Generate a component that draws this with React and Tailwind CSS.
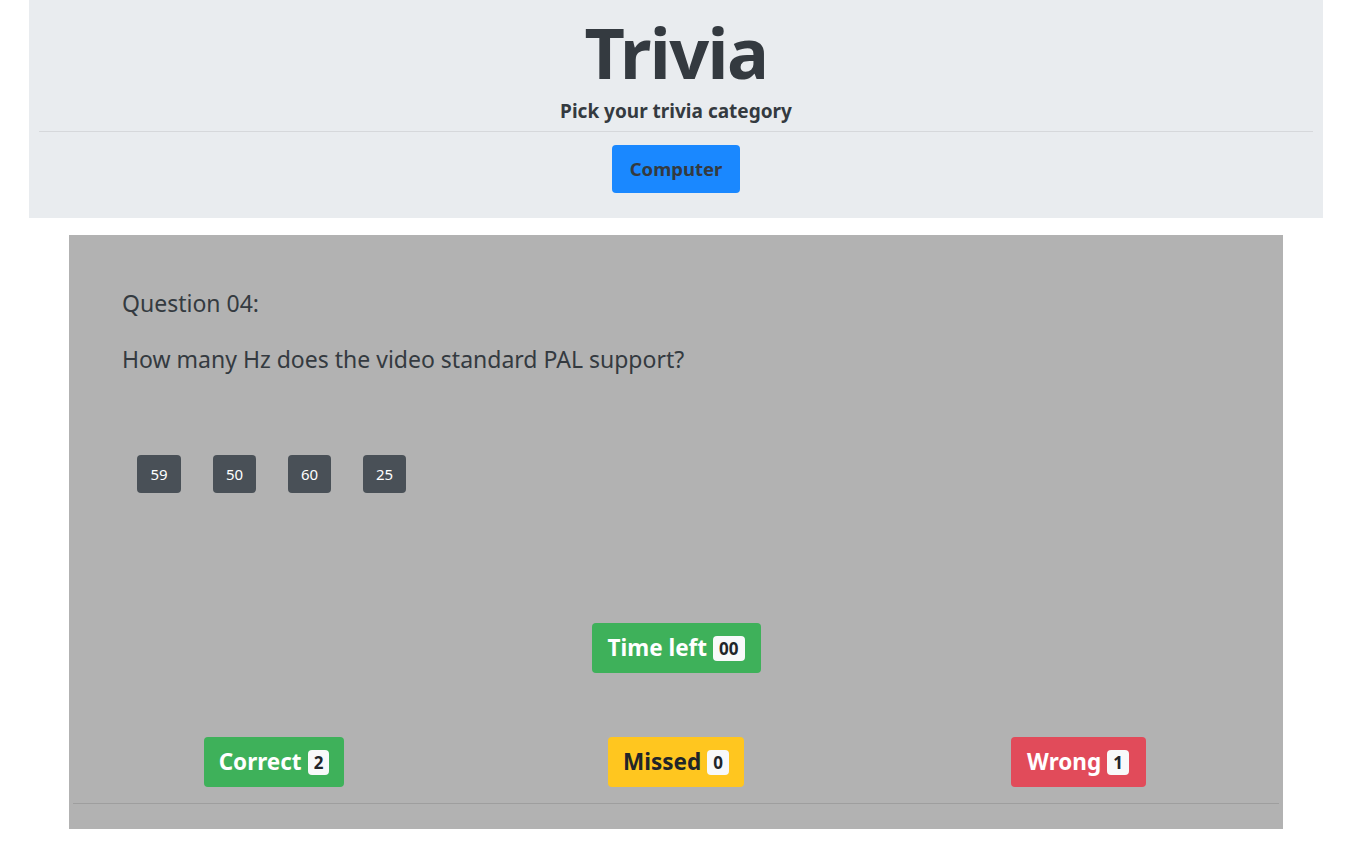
import React from 'react';

const answers = [
  { label: '59', w: 'w-[44px]' },
  { label: '50', w: 'w-[43px]' },
  { label: '60', w: 'w-[43px]' },
  { label: '25', w: 'w-[43px]' },
];

const Badge = ({ children }) => (
  <span className="ml-[6px] inline-flex items-center justify-center rounded-[4px] bg-[#f8f9fa] px-[6px] h-[25px] text-[17px] font-bold leading-none text-[#212529]">
    {children}
  </span>
);

const App = () => {
  return (
    <div className="min-h-screen w-full bg-white font-['Noto_Sans',sans-serif] text-[#343a40]">
      {/* header */}
      <div className="ml-[29px] w-[1294px] bg-[#e9ecef] pt-[10px] pb-[25px] text-center">
        <h1 className="text-[70px] font-bold leading-[84px] tracking-[-1.5px]">Trivia</h1>
        <p className="mt-[5px] text-[19px] font-bold leading-[25px]">Pick your trivia category</p>
        <hr className="mx-[10px] mt-[7px] border-t border-[#d6d8db]" />
        <div className="mt-[13px] flex justify-center">
          <button className="h-[48px] w-[128px] rounded-[4px] bg-[#1a88ff] text-[18.5px] font-bold text-[#343a40]">
            Computer
          </button>
        </div>
      </div>

      {/* game panel */}
      <div className="ml-[69px] w-[1214px] mt-[17px] bg-[#b2b2b2] pt-[52px] pb-[25px]">
        <div className="px-[53px]">
          <h4 className="text-[23px] leading-[32px]">Question 04:</h4>
          <h4 className="mt-[24px] text-[23px] leading-[32px]">How many Hz does the video standard PAL support?</h4>
          <div className="mt-[80px] flex gap-[32px] pl-[15px]">
            {answers.map((a) => (
              <button
                key={a.label}
                className={`flex h-[38px] ${a.w} items-center justify-center rounded-[4px] bg-[#495057] text-[15px] text-white`}
              >
                {a.label}
              </button>
            ))}
          </div>
        </div>

        <div className="mt-[130px] flex justify-center">
          <div className="flex h-[50px] w-[169px] items-center justify-center rounded-[4px] bg-[#3eb15a] text-[22.5px] font-bold text-white">
            Time left
            <Badge>00</Badge>
          </div>
        </div>

        <div className="mx-[4px] mt-[64px] grid grid-cols-3">
          <div className="flex justify-center">
            <div className="flex h-[50px] w-[140px] items-center justify-center rounded-[4px] bg-[#3eb15a] text-[22.5px] font-bold text-white">
              Correct
              <Badge>2</Badge>
            </div>
          </div>
          <div className="flex justify-center">
            <div className="flex h-[50px] w-[136px] items-center justify-center rounded-[4px] bg-[#ffc61f] text-[22.5px] font-bold text-[#212529]">
              Missed
              <Badge>0</Badge>
            </div>
          </div>
          <div className="flex justify-center">
            <div className="flex h-[50px] w-[135px] items-center justify-center rounded-[4px] bg-[#e14b5a] text-[22.5px] font-bold text-white">
              Wrong
              <Badge>1</Badge>
            </div>
          </div>
        </div>
        <hr className="mx-[4px] mt-[16px] border-t border-[#9e9e9e]" />
      </div>
    </div>
  );
};

export default App;
